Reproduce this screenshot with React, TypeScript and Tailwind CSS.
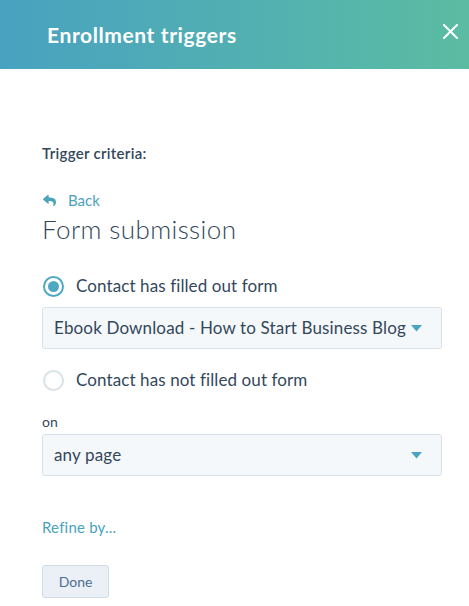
import React from "react";
import { FaReply } from "react-icons/fa";

const Caret = () => (
  <svg width="11" height="7" viewBox="0 0 11 7" className="shrink-0">
    <path d="M0 0 L11 0 L5.5 6.5 Z" fill="#4aa5c0" />
  </svg>
);

const Radio = ({ checked, label }: { checked?: boolean; label: string }) => (
  <div className="flex items-center h-6">
    <span
      className={
        checked
          ? "w-[21px] h-[21px] rounded-full border-2 border-[#4fa8c2] flex items-center justify-center ml-[1px]"
          : "w-[21px] h-[21px] rounded-full border-2 border-[#dbe2e8] ml-[1px]"
      }
    >
      {checked && <span className="w-[11px] h-[11px] rounded-full bg-[#4fa8c2]" />}
    </span>
    <span className="ml-[12px] text-[17px] tracking-[0.1px] text-[#33475b]">{label}</span>
  </div>
);

const Select = ({ value }: { value: string }) => (
  <div className="h-[42px] flex items-center justify-between rounded-[3px] border border-[#d8e1ea] bg-[#f5f8fa] pl-[11px] pr-[19px]">
    <span className="text-[17px] tracking-[0.15px] text-[#33475b]">{value}</span>
    <Caret />
  </div>
);

export default function App() {
  return (
    <div className="w-[469px] h-[606px] bg-white font-['Lato',sans-serif] overflow-hidden">
      <div className="h-[69px] flex items-center justify-between pl-[47px] pr-[11px] bg-gradient-to-r from-[#49a2c0] to-[#5bbca2]">
        <span className="text-white font-bold text-[21px] tracking-[0.6px]">Enrollment triggers</span>
        <svg width="15" height="15" viewBox="0 0 15 15" className="mb-[6px]">
          <path d="M1 1 L14 14 M14 1 L1 14" stroke="white" strokeWidth="2" strokeLinecap="round" />
        </svg>
      </div>
      <div className="pl-[42px] pr-[27px]">
        <div className="mt-[75px] text-[15px] leading-[18px] font-semibold tracking-[0.3px] text-[#33475b]">Trigger criteria:</div>
        <div className="mt-[28px] h-5 flex items-center text-[#4aa2bb]">
          <FaReply className="w-[15px] h-[13px]" />
          <span className="ml-[11px] text-[15px]">Back</span>
        </div>
        <div className="mt-[3px] h-8 flex items-center text-[26px] font-light text-[#33475b] tracking-[0.4px]">Form submission</div>
        <div className="mt-[29px]">
          <Radio checked label="Contact has filled out form" />
        </div>
        <div className="mt-[9px]">
          <Select value="Ebook Download - How to Start Business Blog" />
        </div>
        <div className="mt-[19px]">
          <Radio label="Contact has not filled out form" />
        </div>
        <div className="mt-[21px] text-[14px] leading-[18px] text-[#33475b]">on</div>
        <div className="mt-[3px]">
          <Select value="any page" />
        </div>
        <div className="mt-[41px] h-5 flex items-center text-[15px] tracking-[0.2px] text-[#4aa2bb]">Refine by...</div>
        <div className="mt-[28px]">
          <button className="w-[67px] h-[33px] rounded-[3px] border border-[#cfdbe6] bg-[#eaf0f6] text-[14px] text-[#506e91]">
            Done
          </button>
        </div>
      </div>
    </div>
  );
}
